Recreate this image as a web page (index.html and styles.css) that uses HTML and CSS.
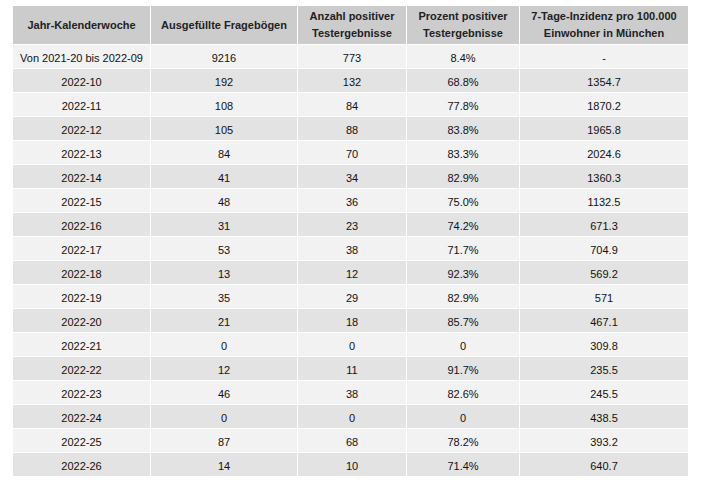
FILE: index.html
```html
<!DOCTYPE html>
<html lang="de">
<head>
<meta charset="utf-8">
<title>Testergebnisse</title>
<link rel="stylesheet" href="styles.css">
</head>
<body>
<div class="wrap">
<table class="data">
  <colgroup>
    <col class="c1"><col class="c2"><col class="c3"><col class="c4"><col class="c5">
  </colgroup>
  <thead>
    <tr>
      <th>Jahr-Kalenderwoche</th>
      <th>Ausgefüllte Fragebögen</th>
      <th>Anzahl positiver<br>Testergebnisse</th>
      <th>Prozent positiver<br>Testergebnisse</th>
      <th>7-Tage-Inzidenz pro 100.000<br>Einwohner in München</th>
    </tr>
  </thead>
  <tbody>
    <tr><td>Von 2021-20 bis 2022-09</td><td>9216</td><td>773</td><td>8.4%</td><td>-</td></tr>
    <tr><td>2022-10</td><td>192</td><td>132</td><td>68.8%</td><td>1354.7</td></tr>
    <tr><td>2022-11</td><td>108</td><td>84</td><td>77.8%</td><td>1870.2</td></tr>
    <tr><td>2022-12</td><td>105</td><td>88</td><td>83.8%</td><td>1965.8</td></tr>
    <tr><td>2022-13</td><td>84</td><td>70</td><td>83.3%</td><td>2024.6</td></tr>
    <tr><td>2022-14</td><td>41</td><td>34</td><td>82.9%</td><td>1360.3</td></tr>
    <tr><td>2022-15</td><td>48</td><td>36</td><td>75.0%</td><td>1132.5</td></tr>
    <tr><td>2022-16</td><td>31</td><td>23</td><td>74.2%</td><td>671.3</td></tr>
    <tr><td>2022-17</td><td>53</td><td>38</td><td>71.7%</td><td>704.9</td></tr>
    <tr><td>2022-18</td><td>13</td><td>12</td><td>92.3%</td><td>569.2</td></tr>
    <tr><td>2022-19</td><td>35</td><td>29</td><td>82.9%</td><td>571</td></tr>
    <tr><td>2022-20</td><td>21</td><td>18</td><td>85.7%</td><td>467.1</td></tr>
    <tr><td>2022-21</td><td>0</td><td>0</td><td>0</td><td>309.8</td></tr>
    <tr><td>2022-22</td><td>12</td><td>11</td><td>91.7%</td><td>235.5</td></tr>
    <tr><td>2022-23</td><td>46</td><td>38</td><td>82.6%</td><td>245.5</td></tr>
    <tr><td>2022-24</td><td>0</td><td>0</td><td>0</td><td>438.5</td></tr>
    <tr><td>2022-25</td><td>87</td><td>68</td><td>78.2%</td><td>393.2</td></tr>
    <tr><td>2022-26</td><td>14</td><td>10</td><td>71.4%</td><td>640.7</td></tr>
  </tbody>
</table>
</div>
</body>
</html>
```
FILE: styles.css
```css
html, body {
  margin: 0;
  padding: 0;
  background: #ffffff;
}

.wrap {
  padding: 5px 0 0 12px;
}

.data {
  width: 677px;
  table-layout: fixed;
  border-collapse: separate;
  border-spacing: 1px;
  font-family: "Liberation Sans", Arial, sans-serif;
  font-size: 11px;
  color: #111111;
}

.c1 { width: 137px; }
.c2 { width: 146px; }
.c3 { width: 108px; }
.c4 { width: 112px; }
.c5 { width: 168px; }

.data th {
  background: #cccccc;
  color: #222222;
  font-weight: bold;
  height: 38px;
  line-height: 17px;
  padding: 0;
  text-align: center;
  vertical-align: middle;
}

.data td {
  height: 23px;
  padding: 0;
  text-align: center;
  vertical-align: middle;
  line-height: 14px;
  padding-top: 2px;
  box-sizing: border-box;
}

.data tbody tr:nth-child(odd) td {
  background: #f2f2f2;
}

.data tbody tr:nth-child(even) td {
  background: #e3e3e3;
}
```
